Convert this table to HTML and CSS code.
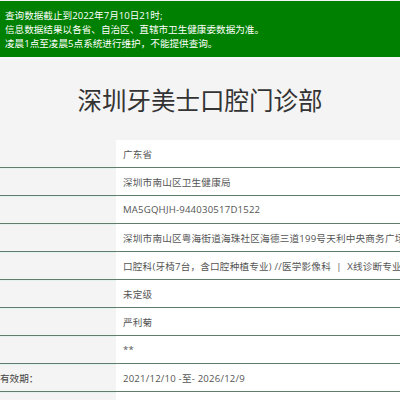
FILE: index.html
```html
<!DOCTYPE html>
<html lang="zh-CN">
<head>
<meta charset="utf-8">
<title>深圳牙美士口腔门诊部</title>
<link rel="stylesheet" href="styles.css">
</head>
<body>
<div class="notice">
  <p>查询数据截止到2022年7月10日21时;</p>
  <p>信息数据结果以各省、自治区、直辖市卫生健康委数据为准。</p>
  <p>凌晨1点至凌晨5点系统进行维护，不能提供查询。</p>
</div>
<h1 class="title">深圳牙美士口腔门诊部</h1>
<div class="table">
  <div class="row"><div class="label"></div><div class="value">广东省</div></div>
  <div class="row"><div class="label"></div><div class="value">深圳市南山区卫生健康局</div></div>
  <div class="row"><div class="label"></div><div class="value">MA5GQHJH-944030517D1522</div></div>
  <div class="row"><div class="label"></div><div class="value">深圳市南山区粤海街道海珠社区海德三道199号天利中央商务广场</div></div>
  <div class="row"><div class="label"></div><div class="value">口腔科(牙椅7台，含口腔种植专业) //医学影像科 &nbsp;|&nbsp; X线诊断专业</div></div>
  <div class="row"><div class="label"></div><div class="value">未定级</div></div>
  <div class="row"><div class="label"></div><div class="value">严利菊</div></div>
  <div class="row"><div class="label"></div><div class="value">**</div></div>
  <div class="row"><div class="label">有效期：</div><div class="value">2021/12/10 -至- 2026/12/9</div></div>
  <div class="row"><div class="label"></div><div class="value"></div></div>
</div>
</body>
</html>
```
FILE: styles.css
```css
html, body {
  margin: 0;
  padding: 0;
  background: #f4f4f4;
  font-family: "Open Sans", "Noto Sans CJK SC", sans-serif;
  overflow: hidden;
}
.notice {
  margin-top: 1px;
  background: #008000;
  color: #ffffff;
  padding: 8px 5px 6px;
  font-size: 9.6px;
  line-height: 14px;
  border-bottom: 1px solid #f8f8fa;
}
.notice p {
  margin: 0;
  white-space: nowrap;
}
.title {
  margin: 0;
  padding: 27px 0 25px;
  text-align: center;
  font-family: "Noto Sans CJK SC", sans-serif;
  font-weight: 400;
  font-size: 24.5px;
  line-height: 30px;
  color: #333333;
}
.table {
  display: flex;
  flex-direction: column;
}
.row {
  display: flex;
  height: 28px;
  box-sizing: border-box;
  border-bottom: 1px solid #5f7c6d;
  box-shadow: 0 1px 0 #e3f2ef;
  font-size: 9.6px;
}
.label {
  width: 116px;
  flex: none;
  display: flex;
  align-items: center;
  color: #444444;
  white-space: nowrap;
}
.value {
  flex: 1;
  min-width: 0;
  background: #ffffff;
  padding-left: 7px;
  display: flex;
  align-items: center;
  color: #555555;
  letter-spacing: 0.2px;
  white-space: nowrap;
  overflow: hidden;
}
```
